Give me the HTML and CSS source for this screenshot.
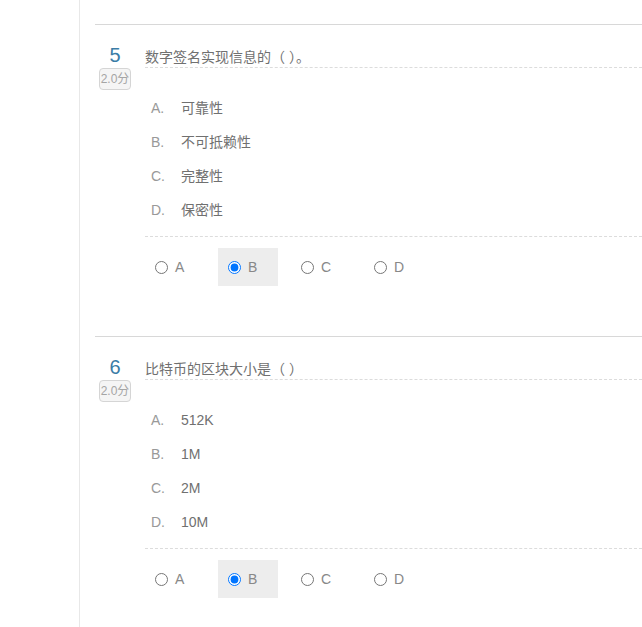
FILE: index.html
```html
<!DOCTYPE html>
<html lang="zh-CN">
<head>
    <meta charset="UTF-8">
    <title>作业</title>
    <link rel="stylesheet" href="styles.css">
</head>
<body>
    <div class="page">
        <div class="side"></div>
        <div class="main">
            <div class="question">
                <div class="q-head">
                    <div class="q-num">
                        <span class="num">5</span>
                        <span class="score">2.0分</span>
                    </div>
                    <div class="q-title">数字签名实现信息的（ ）。</div>
                </div>
                <ul class="options">
                    <li><span class="letter">A.</span>可靠性</li>
                    <li><span class="letter">B.</span>不可抵赖性</li>
                    <li><span class="letter">C.</span>完整性</li>
                    <li><span class="letter">D.</span>保密性</li>
                </ul>
                <div class="answers">
                    <label class="answer"><input type="radio" name="q5">A</label>
                    <label class="answer checked"><input type="radio" name="q5" checked>B</label>
                    <label class="answer"><input type="radio" name="q5">C</label>
                    <label class="answer"><input type="radio" name="q5">D</label>
                </div>
            </div>

            <div class="question">
                <div class="q-head">
                    <div class="q-num">
                        <span class="num">6</span>
                        <span class="score">2.0分</span>
                    </div>
                    <div class="q-title">比特币的区块大小是（ ）</div>
                </div>
                <ul class="options">
                    <li><span class="letter">A.</span>512K</li>
                    <li><span class="letter">B.</span>1M</li>
                    <li><span class="letter">C.</span>2M</li>
                    <li><span class="letter">D.</span>10M</li>
                </ul>
                <div class="answers">
                    <label class="answer"><input type="radio" name="q6">A</label>
                    <label class="answer checked"><input type="radio" name="q6" checked>B</label>
                    <label class="answer"><input type="radio" name="q6">C</label>
                    <label class="answer"><input type="radio" name="q6">D</label>
                </div>
            </div>
        </div>
    </div>
</body>
</html>
```

FILE: styles.css
```css
body {
    margin: 0;
    font-family: 'Liberation Sans', 'Noto Sans CJK SC', Arial, sans-serif;
    color: #707070;
    background: #fff;
    font-size: 14px;
}

.page {
    display: flex;
    min-height: 627px;
}

.side {
    width: 79px;
    border-right: 1px solid #e8e8e8;
    flex-shrink: 0;
}

.main {
    flex: 1;
    padding: 24px 0 0 15px;
}

/* Question block */
.question {
    border-top: 1px solid #d8d8d8;
    padding: 18px 0 50px;
}

.q-head {
    display: flex;
    align-items: flex-start;
}

.q-num {
    width: 40px;
    margin-right: 10px;
    display: flex;
    flex-direction: column;
    align-items: center;
}

.q-num .num {
    font-size: 20px;
    line-height: 24px;
    color: #3b7ca6;
}

.q-num .score {
    margin-top: 1px;
    width: 30px;
    height: 20px;
    line-height: 20px;
    text-align: center;
    font-size: 12px;
    color: #a5a5a5;
    background: #f5f5f5;
    border: 1px solid #d5d5d5;
    border-radius: 4px;
}

.q-title {
    flex: 1;
    margin-top: 4px;
    line-height: 20px;
    border-bottom: 1px dashed #dcdcdc;
}

/* Options list */
.options {
    list-style: none;
    margin: -24px 0 0 50px;
    padding: 25px 0 9px 6px;
    border-bottom: 1px dashed #dcdcdc;
}

.options li {
    line-height: 34px;
}

.options .letter {
    display: inline-block;
    width: 30px;
    color: #999;
}

/* Answer radios */
.answers {
    display: flex;
    gap: 13px;
    margin: 11px 0 0 50px;
}

.answer {
    width: 50px;
    height: 38px;
    padding-left: 10px;
    display: flex;
    align-items: center;
    color: #888;
    font-size: 14px;
}

.answer input {
    width: 13px;
    height: 13px;
    margin: 0 7px 0 0;
}

.answer.checked {
    background: #ededed;
}
```
